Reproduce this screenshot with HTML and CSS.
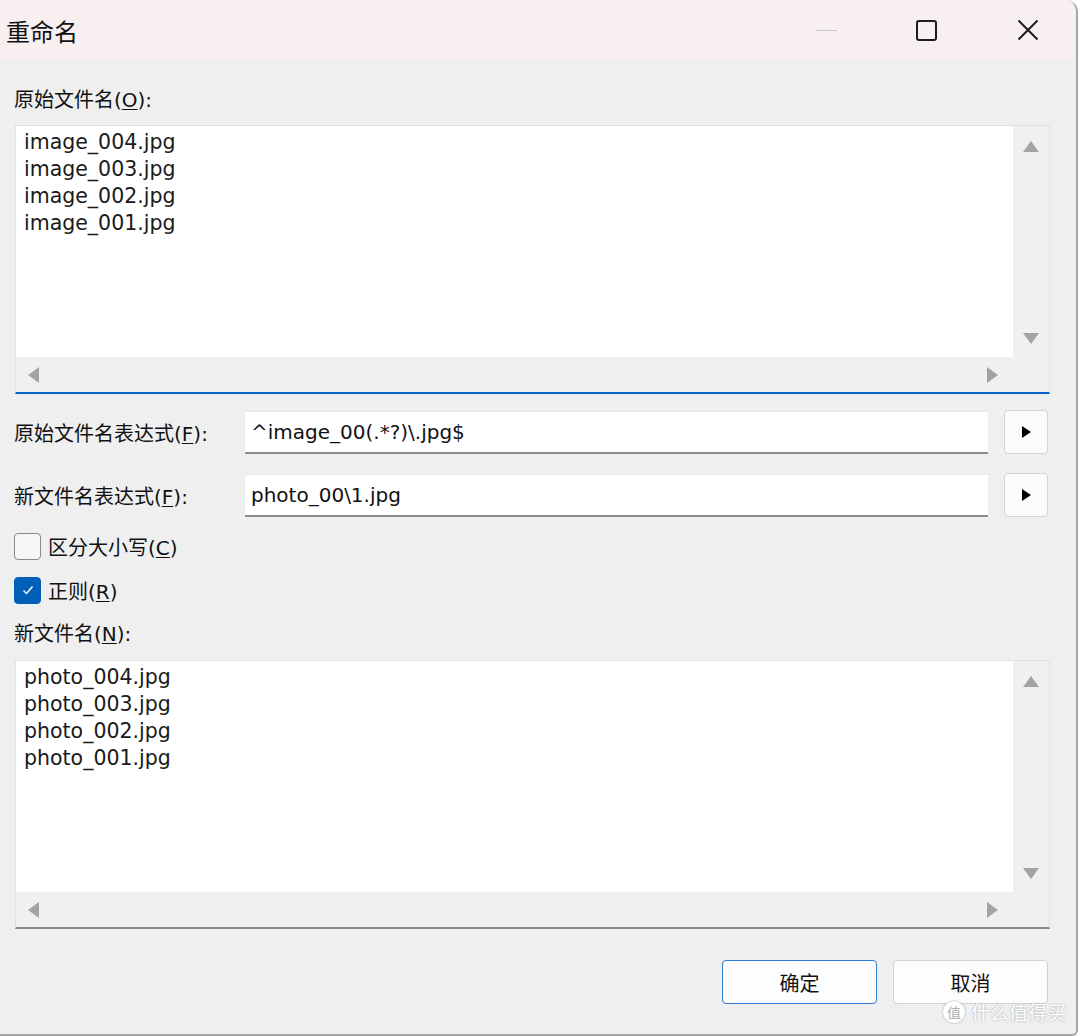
FILE: index.html
```html
<!DOCTYPE html>
<html lang="zh-CN">
<head>
  <meta charset="UTF-8" />
  <meta name="viewport" content="width=device-width, initial-scale=1.0"/>
  <title>重命名</title>
  <link rel="stylesheet" href="styles.css">
</head>
<body>
  <div class="window">
    <!-- 标题栏 -->
    <div class="titlebar">
      <span class="title">重命名</span>
      <div class="controls">
        <span class="ctl"><span class="min-line"></span></span>
        <span class="ctl"><span class="max-box"></span></span>
        <span class="ctl">
          <svg width="22" height="22" viewBox="0 0 22 22">
            <path d="M1.5,1.5 L20.5,20.5 M20.5,1.5 L1.5,20.5" stroke="#1c1c1c" stroke-width="2" fill="none"/>
          </svg>
        </span>
      </div>
    </div>

    <div class="content">
      <div class="label">原始文件名(<u>O</u>):</div>
      <div class="listbox focused">
        <div class="list-body">
          <div>image_004.jpg</div>
          <div>image_003.jpg</div>
          <div>image_002.jpg</div>
          <div>image_001.jpg</div>
        </div>
        <div class="vscroll"><span class="arr up"></span><span class="arr down"></span></div>
        <div class="hscroll"><span class="arr left"></span><span class="arr right"></span></div>
      </div>

      <div class="expr-row first">
        <span class="expr-label">原始文件名表达式(<u>F</u>):</span>
        <div class="input">^image_00(.*?)\.jpg$</div>
        <button class="menu-btn"><span class="tri"></span></button>
      </div>
      <div class="expr-row">
        <span class="expr-label">新文件名表达式(<u>F</u>):</span>
        <div class="input">photo_00\1.jpg</div>
        <button class="menu-btn"><span class="tri"></span></button>
      </div>

      <label class="check first">
        <span class="box"></span>
        <span>区分大小写(<u>C</u>)</span>
      </label>
      <label class="check">
        <span class="box on">
          <svg width="14" height="14" viewBox="0 0 14 14">
            <path d="M2.5,7.5 L5.5,10.5 L11.5,3.5" stroke="#fff" stroke-width="1.4" fill="none"/>
          </svg>
        </span>
        <span>正则(<u>R</u>)</span>
      </label>

      <div class="label second">新文件名(<u>N</u>):</div>
      <div class="listbox">
        <div class="list-body">
          <div>photo_004.jpg</div>
          <div>photo_003.jpg</div>
          <div>photo_002.jpg</div>
          <div>photo_001.jpg</div>
        </div>
        <div class="vscroll"><span class="arr up"></span><span class="arr down"></span></div>
        <div class="hscroll"><span class="arr left"></span><span class="arr right"></span></div>
      </div>

      <div class="actions">
        <button class="btn default">确定</button>
        <button class="btn">取消</button>
      </div>
    </div>

    <div class="watermark"><span class="wm-badge">值</span>什么值得买</div>
  </div>
</body>
</html>
```

FILE: styles.css
```css
body {
  margin: 0;
  background: #ffffff;
  font-family: "DejaVu Sans", "Noto Sans CJK SC", sans-serif;
  font-size: 20px;
  color: #111;
}

u {
  text-decoration-thickness: 1px;
  text-underline-offset: 2px;
}

/* 窗口外框 */
.window {
  position: relative;
  width: 1076px;
  height: 1034px;
  background: #efefef;
  border-right: 2px solid #a6a6a6;
  border-bottom: 2px solid #a6a6a6;
  border-top-right-radius: 12px;
  border-bottom-right-radius: 6px;
  overflow: hidden;
}

/* 标题栏 */
.titlebar {
  height: 60px;
  display: flex;
  align-items: center;
  justify-content: space-between;
  background: #f8eff0;
}
.title {
  padding-left: 6px;
  font-size: 24px;
  font-family: "Noto Sans CJK SC", sans-serif;
  color: #111;
}
.controls {
  display: flex;
  height: 100%;
}
.ctl {
  width: 100px;
  display: flex;
  align-items: center;
  justify-content: center;
}
.ctl:last-child {
  padding-left: 4px;
  width: 96px;
}
.min-line {
  width: 21px;
  height: 1px;
  background: #c4c4c4;
}
.max-box {
  width: 17px;
  height: 17px;
  border: 2px solid #1c1c1c;
  border-radius: 3px;
}

/* 主体 */
.content {
  padding: 26px 28px 0 14px;
}
.label {
  height: 28px;
  line-height: 28px;
  margin-bottom: 11px;
}
.label.second {
  margin-top: 16px;
  margin-bottom: 12px;
}

/* 列表框 */
.listbox {
  margin-left: 1px;
  margin-right: -2px;
  height: 266px;
  display: grid;
  grid-template-columns: 1fr 36px;
  grid-template-rows: 1fr 35px;
  border: 1px solid #e2e2e2;
  border-bottom: 2px solid #8a8a8a;
  background: #f0f0f0;
}
.listbox.focused {
  border-bottom-color: #0063c6;
}
.list-body {
  background: #fff;
  padding: 3px 8px;
  font-size: 20.5px;
  line-height: 27px;
  color: #1a1a1a;
}
.vscroll {
  display: flex;
  flex-direction: column;
  justify-content: space-between;
  align-items: center;
  padding: 15px 0 13px;
}
.hscroll {
  grid-column: 1 / 3;
  display: flex;
  justify-content: space-between;
  align-items: center;
  padding: 0 51px 0 12px;
}
.arr {
  width: 0;
  height: 0;
  border-style: solid;
  border-color: transparent;
}
.arr.up {
  border-width: 0 8px 11px 8px;
  border-bottom-color: #a3a3a3;
}
.arr.down {
  border-width: 11px 8px 0 8px;
  border-top-color: #a3a3a3;
}
.arr.left {
  border-width: 8px 11px 8px 0;
  border-right-color: #a3a3a3;
}
.arr.right {
  border-width: 8px 0 8px 11px;
  border-left-color: #a3a3a3;
}

/* 表达式行 */
.expr-row {
  display: flex;
  align-items: center;
  height: 44px;
  margin-top: 19px;
}
.expr-row.first {
  margin-top: 16px;
}
.expr-label {
  width: 231px;
  flex: none;
}
.input {
  flex: 1;
  height: 43px;
  line-height: 40px;
  padding: 0 6px;
  background: #fff;
  border-top: 1px solid #e8e8e8;
  border-bottom: 2px solid #8b8b8b;
  box-sizing: border-box;
  white-space: nowrap;
}
.menu-btn {
  margin-left: 16px;
  width: 44px;
  height: 44px;
  flex: none;
  background: #fbfbfb;
  border: 1px solid #d3d3d3;
  border-radius: 4px;
  display: flex;
  align-items: center;
  justify-content: center;
  padding: 0;
}
.tri {
  width: 0;
  height: 0;
  border-style: solid;
  border-color: transparent;
  border-width: 6px 0 6px 9px;
  border-left-color: #000;
}

/* 复选框 */
.check {
  display: flex;
  align-items: center;
  gap: 7px;
  height: 28px;
  margin-top: 16px;
}
.check.first {
  margin-top: 15px;
}
.box {
  width: 27px;
  height: 27px;
  box-sizing: border-box;
  border: 1.5px solid #8a8a8a;
  border-radius: 4px;
  background: #f6f6f6;
  display: flex;
  align-items: center;
  justify-content: center;
}
.box.on {
  background: #005fb8;
  border-color: #005fb8;
}

/* 底部按钮 */
.actions {
  display: flex;
  justify-content: flex-end;
  gap: 16px;
  margin-top: 31px;
}
.btn {
  width: 155px;
  height: 44px;
  font: inherit;
  font-family: "Noto Sans CJK SC", sans-serif;
  color: #111;
  background: #fdfdfd;
  border: 1px solid #d2d2d2;
  border-radius: 4px;
}
.btn.default {
  border-color: #2a7bd4;
}

/* 角标 */
.watermark {
  position: absolute;
  right: 10px;
  bottom: 9px;
  display: flex;
  align-items: center;
  gap: 6px;
  font-family: "Noto Sans CJK SC", sans-serif;
  font-size: 19px;
  color: #fff;
  text-shadow: 0 0 2px #9a9a9a;
}
.wm-badge {
  width: 22px;
  height: 22px;
  border-radius: 50%;
  background: #fff;
  color: #b0b0b0;
  text-shadow: none;
  font-size: 14px;
  display: flex;
  align-items: center;
  justify-content: center;
  box-shadow: 0 0 2px #999;
}
```
